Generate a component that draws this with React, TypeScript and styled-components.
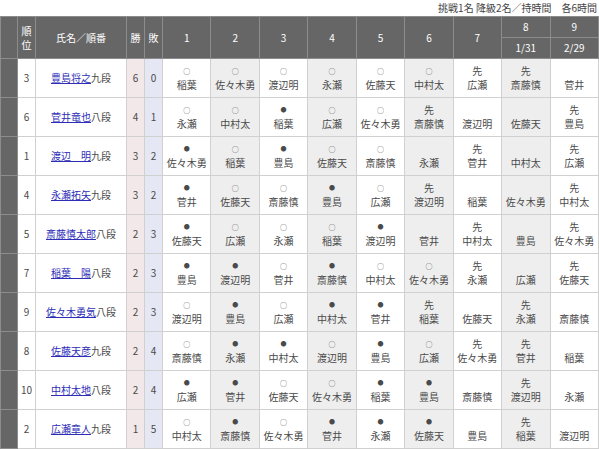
import styled, { createGlobalStyle } from 'styled-components';

const GlobalStyle = createGlobalStyle`
    body {
        margin: 0;
        background: #fff;
        font-family: "Noto Sans CJK JP", "Noto Sans", sans-serif;
    }
`;

const Page = styled.div`
    width: 599px;
`;

const Caption = styled.div`
    height: 16px;
    line-height: 15px;
    text-align: right;
    font-size: 10px;
    color: #444;
    padding-right: 2px;
    white-space: pre;
`;

const Table = styled.table`
    width: 599px;
    table-layout: fixed;
    border-collapse: collapse;
    font-size: 10px;
    color: #4a4a4a;
`;

const HeadCell = styled.th`
    background: #666;
    color: #fff;
    font-weight: normal;
    border: 1px solid #8c8c8c;
    height: 20px;
    padding: 0;
    text-align: center;
    line-height: 14px;
`;

const SideCell = styled.td`
    background: #666;
    border: 1px solid #8c8c8c;
    padding: 0;
`;

const Cell = styled.td<{ $bg?: string }>`
    background: ${(p) => p.$bg || '#fff'};
    border: 1px solid #d0d0d0;
    height: 38px;
    padding: 0;
    text-align: center;
    vertical-align: middle;
    line-height: 14px;
`;

const NameLink = styled.a`
    color: #2d2db8;
    text-decoration: underline;
`;

const Mark = styled.div<{ $size: number }>`
    height: 14px;
    line-height: 14px;
    font-size: ${(p) => p.$size}px;
`;

const Opponent = styled.div`
    height: 14px;
    line-height: 14px;
    white-space: nowrap;
`;

type Game = [string, string];

const players: { rank: number; name: string; dan: string; win: number; loss: number; games: Game[] }[] = [
    { rank: 3, name: '豊島将之', dan: '九段', win: 6, loss: 0, games: [['○', '稲葉'], ['○', '佐々木勇'], ['○', '渡辺明'], ['○', '永瀬'], ['○', '佐藤天'], ['○', '中村太'], ['先', '広瀬'], ['先', '斎藤慎'], ['', '菅井']] },
    { rank: 6, name: '菅井竜也', dan: '八段', win: 4, loss: 1, games: [['○', '永瀬'], ['○', '中村太'], ['●', '稲葉'], ['○', '広瀬'], ['○', '佐々木勇'], ['先', '斎藤慎'], ['', '渡辺明'], ['', '佐藤天'], ['先', '豊島']] },
    { rank: 1, name: '渡辺　明', dan: '九段', win: 3, loss: 2, games: [['●', '佐々木勇'], ['○', '稲葉'], ['●', '豊島'], ['○', '佐藤天'], ['○', '斎藤慎'], ['', '永瀬'], ['先', '菅井'], ['', '中村太'], ['先', '広瀬']] },
    { rank: 4, name: '永瀬拓矢', dan: '九段', win: 3, loss: 2, games: [['●', '菅井'], ['○', '佐藤天'], ['○', '斎藤慎'], ['●', '豊島'], ['○', '広瀬'], ['先', '渡辺明'], ['', '稲葉'], ['', '佐々木勇'], ['先', '中村太']] },
    { rank: 5, name: '斎藤慎太郎', dan: '八段', win: 2, loss: 3, games: [['●', '佐藤天'], ['○', '広瀬'], ['○', '永瀬'], ['○', '稲葉'], ['●', '渡辺明'], ['', '菅井'], ['先', '中村太'], ['', '豊島'], ['先', '佐々木勇']] },
    { rank: 7, name: '稲葉　陽', dan: '八段', win: 2, loss: 3, games: [['●', '豊島'], ['●', '渡辺明'], ['○', '菅井'], ['●', '斎藤慎'], ['○', '中村太'], ['○', '佐々木勇'], ['先', '永瀬'], ['', '広瀬'], ['先', '佐藤天']] },
    { rank: 9, name: '佐々木勇気', dan: '八段', win: 2, loss: 3, games: [['○', '渡辺明'], ['●', '豊島'], ['○', '広瀬'], ['●', '中村太'], ['●', '菅井'], ['先', '稲葉'], ['', '佐藤天'], ['先', '永瀬'], ['', '斎藤慎']] },
    { rank: 8, name: '佐藤天彦', dan: '九段', win: 2, loss: 4, games: [['○', '斎藤慎'], ['●', '永瀬'], ['●', '中村太'], ['○', '渡辺明'], ['●', '豊島'], ['○', '広瀬'], ['先', '佐々木勇'], ['先', '菅井'], ['', '稲葉']] },
    { rank: 10, name: '中村太地', dan: '八段', win: 2, loss: 4, games: [['●', '広瀬'], ['●', '菅井'], ['○', '佐藤天'], ['○', '佐々木勇'], ['●', '稲葉'], ['●', '豊島'], ['', '斎藤慎'], ['先', '渡辺明'], ['', '永瀬']] },
    { rank: 2, name: '広瀬章人', dan: '九段', win: 1, loss: 5, games: [['○', '中村太'], ['●', '斎藤慎'], ['○', '佐々木勇'], ['●', '菅井'], ['●', '永瀬'], ['●', '佐藤天'], ['', '豊島'], ['先', '稲葉'], ['', '渡辺明']] },
];

const markSize = (mark: string) => (mark === '先' ? 10 : mark === '●' ? 6 : 7);

const LeagueTable = () => {
    return (
        <Page>
            <Caption>挑戦1名 降級2名／持時間　各6時間</Caption>
            <Table>
                <colgroup>
                    <col style={{ width: 17 }} />
                    <col style={{ width: 18 }} />
                    <col style={{ width: 91 }} />
                    <col style={{ width: 18 }} />
                    <col style={{ width: 18 }} />
                    {Array.from({ length: 9 }).map((_, i) => (
                        <col key={i} />
                    ))}
                </colgroup>
                <thead>
                    <tr>
                        <HeadCell rowSpan={2} />
                        <HeadCell rowSpan={2}>順<br />位</HeadCell>
                        <HeadCell rowSpan={2}>氏名／順番</HeadCell>
                        <HeadCell rowSpan={2}>勝</HeadCell>
                        <HeadCell rowSpan={2}>敗</HeadCell>
                        {[1, 2, 3, 4, 5, 6, 7].map((n) => (
                            <HeadCell key={n} rowSpan={2}>{n}</HeadCell>
                        ))}
                        <HeadCell>8</HeadCell>
                        <HeadCell>9</HeadCell>
                    </tr>
                    <tr>
                        <HeadCell>1/31</HeadCell>
                        <HeadCell>2/29</HeadCell>
                    </tr>
                </thead>
                <tbody>
                    {players.map((p) => (
                        <tr key={p.name}>
                            <SideCell />
                            <Cell>{p.rank}</Cell>
                            <Cell>
                                <NameLink href="#">{p.name}</NameLink>{p.dan}
                            </Cell>
                            <Cell $bg="#f2e8e9">{p.win}</Cell>
                            <Cell $bg="#e5e7f4">{p.loss}</Cell>
                            {p.games.map(([mark, opp], i) => (
                                <Cell key={i} $bg={i % 2 === 1 ? '#eeeeee' : '#fff'}>
                                    <Mark $size={markSize(mark)}>{mark}</Mark>
                                    <Opponent>{opp}</Opponent>
                                </Cell>
                            ))}
                        </tr>
                    ))}
                </tbody>
            </Table>
        </Page>
    );
};

export default function App() {
    return (
        <>
            <GlobalStyle />
            <LeagueTable />
        </>
    );
}
